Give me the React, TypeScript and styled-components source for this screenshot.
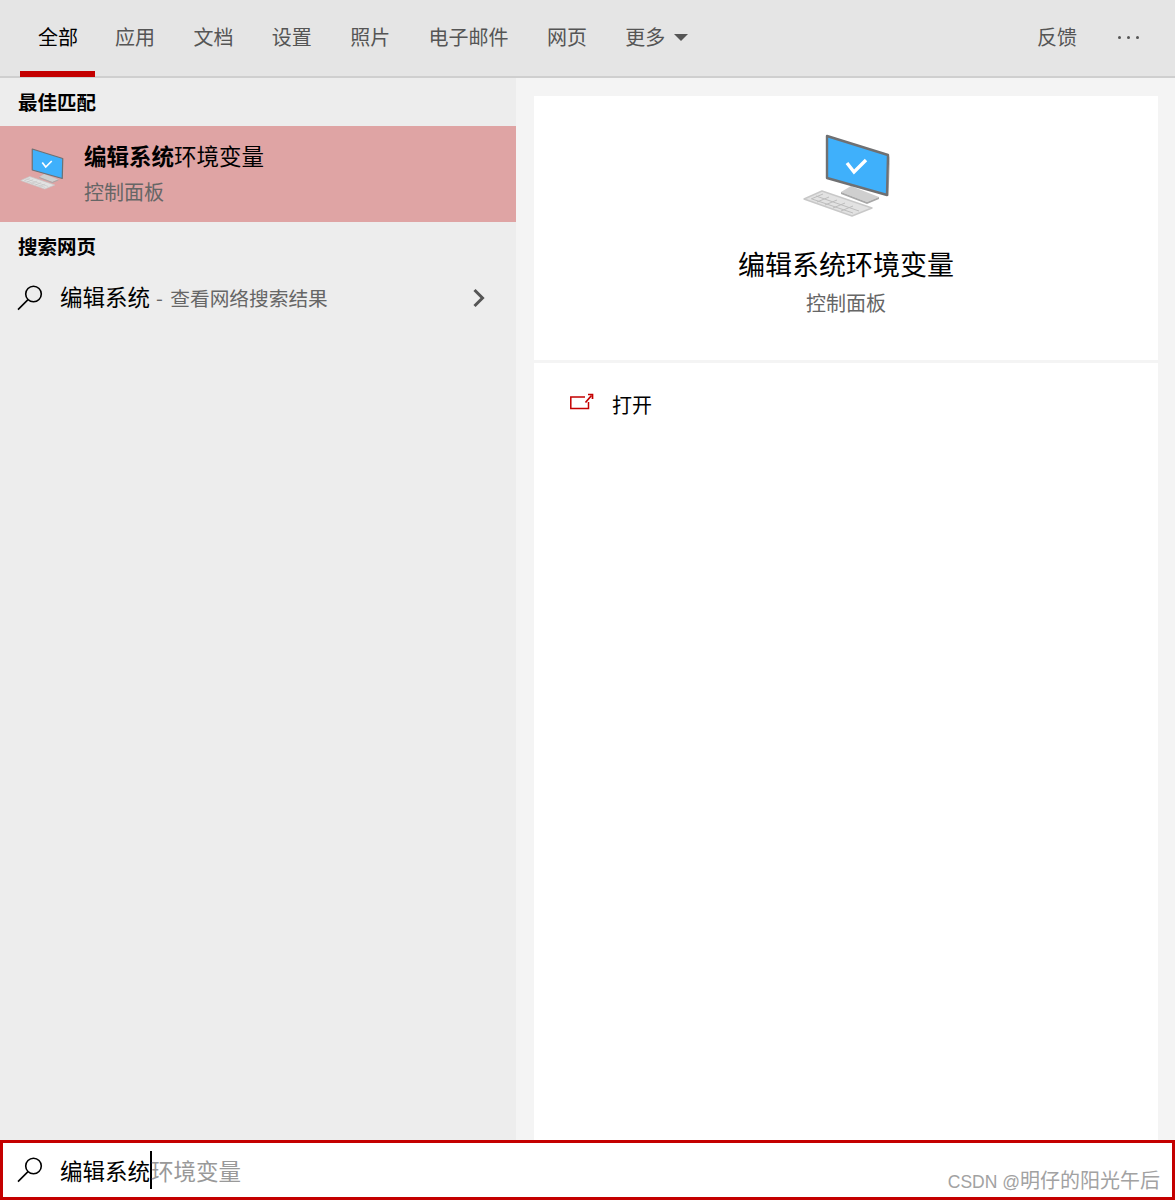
import React from "react";
import styled, { createGlobalStyle } from "styled-components";

const Global = createGlobalStyle`
  html, body { margin: 0; padding: 0; }
  body { font-family: "Noto Sans CJK SC", "Noto Sans", sans-serif; background: #fff; }
  * { box-sizing: border-box; }
`;

const Page = styled.div`
  width: 1175px;
  height: 1200px;
  display: grid;
  grid-template-rows: 78px 1fr 60px;
  position: relative;
  overflow: hidden;
`;

const TabBar = styled.nav`
  display: flex;
  align-items: stretch;
  background: #e5e5e5;
  border-bottom: 2px solid #cfcfcf;
  padding-left: 20px;
`;

const Tab = styled.div<{ $active?: boolean }>`
  display: flex;
  align-items: center;
  gap: 8px;
  height: 77px;
  padding: 3px ${(p) => (p.$active ? "17px" : "18.4px")} 0 ${(p) => (p.$active ? "18px" : "20px")};
  font-size: 20px;
  line-height: 28px;
  color: ${(p) => (p.$active ? "#000" : "#555")};
  border-bottom: 6px solid ${(p) => (p.$active ? "#c40000" : "transparent")};
`;

const Caret = styled.span`
  width: 0;
  height: 0;
  margin-left: 1px;
  border-left: 7.5px solid transparent;
  border-right: 7.5px solid transparent;
  border-top: 7px solid #555;
`;

const TabSpacer = styled.div`
  flex: 1;
`;

const Feedback = styled.div`
  display: flex;
  align-items: center;
  height: 72px;
  margin-right: 41px;
  font-size: 20px;
  color: #555;
`;

const More = styled.div`
  display: flex;
  align-items: center;
  gap: 6px;
  height: 74px;
  margin-right: 36px;
`;

const Dot = styled.span`
  width: 3px;
  height: 3px;
  border-radius: 50%;
  background: #555;
`;

const Body = styled.div`
  display: grid;
  grid-template-columns: 516px 1fr;
  min-height: 0;
`;

const Left = styled.section`
  background: #ededed;
  display: flex;
  flex-direction: column;
`;

const SectionLabel = styled.h2`
  margin: 0;
  height: 48px;
  padding: 0 0 2px 18px;
  display: flex;
  align-items: center;
  font-size: 19.5px;
  font-weight: 700;
  color: #000;
`;

const BestMatch = styled.div`
  height: 96px;
  background: #dfa4a4;
  display: flex;
  align-items: center;
  padding-left: 18px;
  gap: 18px;
`;

const SmallIcon = styled.div`
  display: flex;
  margin-bottom: 11px;
`;

const MatchText = styled.div`
  display: flex;
  flex-direction: column;
  gap: 7px;
  padding-bottom: 3px;
`;

const MatchTitle = styled.div`
  font-size: 22.5px;
  line-height: 31px;
  color: #000;
  b { font-weight: 700; }
`;

const Subtle = styled.div`
  font-size: 20px;
  line-height: 28px;
  color: #666;
`;

const WebRow = styled.div`
  height: 56px;
  display: flex;
  align-items: center;
  padding: 0 30px 0 17px;
  gap: 17px;
`;

const WebText = styled.div`
  flex: 1;
  margin-bottom: 2px;
  font-size: 22.5px;
  line-height: 31px;
  color: #000;
  white-space: nowrap;
`;

const WebHint = styled.span`
  font-size: 19.7px;
  color: #666;
  word-spacing: 3px;
  margin-left: 1px;
`;

const Right = styled.section`
  background: #f4f4f4;
  padding: 18px 17px 0 18px;
  display: flex;
  flex-direction: column;
`;

const Card = styled.div`
  background: #fff;
  height: 264px;
  display: flex;
  flex-direction: column;
  align-items: center;
  padding-top: 34px;
`;

const CardTitle = styled.div`
  font-size: 27px;
  line-height: 40px;
  color: #000;
  margin-top: 24px;
`;

const CardSub = styled.div`
  font-size: 20px;
  line-height: 28px;
  color: #666;
  margin-top: 5px;
`;

const Actions = styled.div`
  flex: 1;
  margin-top: 3px;
  background: #fff;
  padding: 28px 36px;
`;

const ActionRow = styled.div`
  display: flex;
  align-items: center;
  gap: 18px;
  font-size: 20px;
  line-height: 28px;
  color: #000;
`;

const SearchBar = styled.div`
  border: 3px solid #c40000;
  background: #fff;
  display: flex;
  align-items: center;
  padding-left: 14px;
  gap: 17px;
`;

const SearchText = styled.div`
  display: flex;
  align-items: center;
  font-size: 22.5px;
  line-height: 38px;
  color: #000;
`;

const TextCaret = styled.span`
  width: 2px;
  height: 38px;
  background: #000;
  margin-right: -1px;
`;

const Ghost = styled.span`
  color: #999;
`;

const Watermark = styled.div`
  position: absolute;
  right: 15px;
  bottom: 4px;
  font-size: 20px;
  line-height: 28px;
  color: #a2a2a2;
  font-family: "Liberation Sans", "Noto Sans CJK SC", sans-serif;
`;

const WatermarkLatin = styled.span`
  font-size: 17.5px;
`;

const PcIcon = ({ width, height }: { width: number; height: number }) => (
  <svg width={width} height={height} viewBox="20 10 95 90" aria-hidden="true">
    <path d="M25 79 43 71 93 88 73 96Z" fill="#e2e2e2" stroke="#c8c8c8" strokeWidth="1.4" strokeLinejoin="round" />
    <path d="M32 79 44 74M38 82 50 77M46 85 58 80M54 88 66 83M62 91 74 86M37 76 80 91M33 79 74 93" stroke="#bdbdbd" strokeWidth="1" fill="none" />
    <path d="M62 72 72 66 100 77 88 82Z" fill="#cfcfcf" />
    <path d="M62 72 88 82 100 77 100 79 88 84 62 74Z" fill="#a8a8a8" />
    <path d="M110.5 36 111 37 109.5 76 108 75Z" fill="#b9b9b9" />
    <path d="M48 16 109 35 108 75 48 58Z" fill="#3fb0fb" stroke="#6f7072" strokeWidth="2.4" strokeLinejoin="round" />
    <path d="M68 43 75 52 87 40" fill="none" stroke="#fff" strokeWidth="3.4" />
  </svg>
);

const SearchIcon = () => (
  <svg width="26" height="26" viewBox="0 0 26 26" fill="none" stroke="#000" strokeWidth="1.6" aria-hidden="true">
    <circle cx="16.5" cy="9" r="7.8" />
    <path d="M11 14.6 1 24.6" />
  </svg>
);

const Chevron = () => (
  <svg width="14" height="20" viewBox="0 0 14 20" fill="none" stroke="#555" strokeWidth="3" aria-hidden="true">
    <path d="M2.5 2 10.5 10 2.5 18" />
  </svg>
);

const OpenIcon = () => (
  <svg width="24" height="24" viewBox="0 0 24 24" fill="none" stroke="#c40000" aria-hidden="true">
    <path d="M15 4H.8V15.5H18.5V9" strokeWidth="1.5" />
    <path d="M15.5 9.5 21.5 2.5" strokeWidth="1.7" />
    <path d="M18 1.5H22.5V6" strokeWidth="1.7" />
  </svg>
);

const tabs = ["应用", "文档", "设置", "照片", "电子邮件", "网页"];

export default function App() {
  return (
    <Page>
      <Global />
      <TabBar>
        <Tab $active>全部</Tab>
        {tabs.map((t) => (
          <Tab key={t}>{t}</Tab>
        ))}
        <Tab>
          更多
          <Caret />
        </Tab>
        <TabSpacer />
        <Feedback>反馈</Feedback>
        <More>
          <Dot />
          <Dot />
          <Dot />
        </More>
      </TabBar>
      <Body>
        <Left>
          <SectionLabel>最佳匹配</SectionLabel>
          <BestMatch>
            <SmallIcon>
              <PcIcon width={48} height={45} />
            </SmallIcon>
            <MatchText>
              <MatchTitle>
                <b>编辑系统</b>环境变量
              </MatchTitle>
              <Subtle>控制面板</Subtle>
            </MatchText>
          </BestMatch>
          <SectionLabel>搜索网页</SectionLabel>
          <WebRow>
            <SearchIcon />
            <WebText>
              编辑系统 <WebHint>- 查看网络搜索结果</WebHint>
            </WebText>
            <Chevron />
          </WebRow>
        </Left>
        <Right>
          <Card>
            <PcIcon width={95} height={90} />
            <CardTitle>编辑系统环境变量</CardTitle>
            <CardSub>控制面板</CardSub>
          </Card>
          <Actions>
            <ActionRow>
              <OpenIcon />
              打开
            </ActionRow>
          </Actions>
        </Right>
      </Body>
      <SearchBar>
        <SearchIcon />
        <SearchText>
          编辑系统
          <TextCaret />
          <Ghost>环境变量</Ghost>
        </SearchText>
      </SearchBar>
      <Watermark>
        <WatermarkLatin>CSDN @</WatermarkLatin>明仔的阳光午后
      </Watermark>
    </Page>
  );
}
